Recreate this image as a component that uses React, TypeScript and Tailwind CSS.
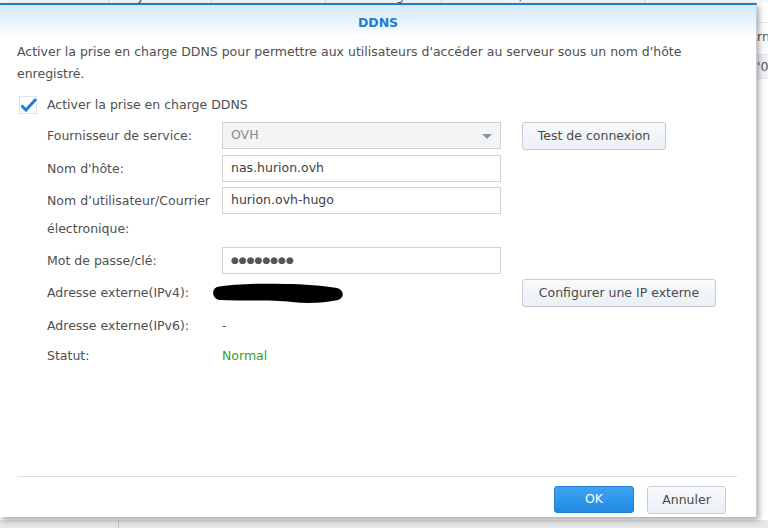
import { ReactNode } from 'react'

function Btn({ children, className = '' }: { children: ReactNode; className?: string }) {
  return (
    <button
      type="button"
      className={`flex h-[28px] items-center justify-center rounded-[3px] border border-[#c5ccd4] bg-gradient-to-b from-[#f8fafc] to-[#eaf0f6] text-[12.5px] text-[#4a4a4a] ${className}`}
    >
      {children}
    </button>
  )
}

function Row({ label, children, extra }: { label: ReactNode; children: ReactNode; extra?: ReactNode }) {
  return (
    <div className="flex items-start">
      <div className="w-[175px] shrink-0 leading-[27px] text-[#4f4f4f]">{label}</div>
      <div className="w-[279px] shrink-0">{children}</div>
      {extra && <div className="ml-[21px]">{extra}</div>}
    </div>
  )
}

function Field({ value, disabled }: { value: ReactNode; disabled?: boolean }) {
  return (
    <div
      className={`relative flex h-[27px] items-center border pl-[8px] ${
        disabled ? 'border-[#cdd2d7] bg-[#f2f4f6] text-[#8a8a8a]' : 'border-[#cfd3d7] bg-white text-[#3e3e3e]'
      }`}
    >
      {value}
    </div>
  )
}

export default function App() {
  const tabs = ['Journal', 'Moniteur', 'Stockage', 'Modifié / Créé le dernier jour', 'Dossier local']

  return (
    <div className="relative h-[528px] w-[768px] overflow-hidden bg-white font-['DejaVu_Sans',sans-serif] text-[12.5px]">
      {/* page behind the dialog */}
      <div className="flex h-full flex-col">
        <div className="h-[3px] overflow-hidden bg-[#f4f6f8]">
          <div className="-mt-[11px] flex pl-[108px] text-[12px] leading-[14px] text-[#555]">
            {tabs.map((t) => (
              <div key={t} className="border-l border-[#d0d5da] px-[30px]">
                {t}
              </div>
            ))}
          </div>
        </div>
        <div className="flex flex-1">
          <div className="w-[757px] shrink-0" />
          <div className="flex-1 overflow-hidden">
            <div className="mt-[19px] border-t border-[#e3e6e9] pt-[4px] text-[12.5px] leading-[20px] text-[#555]">
              rn
            </div>
            <div className="mt-[7px] h-[25px] border-y border-[#e3e8ee] bg-[#eef3f9] text-[12.5px] leading-[24px] text-[#555]">
              '0c
            </div>
          </div>
        </div>
        <div className="flex h-[8px] bg-[#e6e6e6]">
          <div className="w-[119px] border-r border-[#c8c8c8]" />
        </div>
      </div>

      {/* DDNS dialog */}
      <div className="absolute left-0 top-[3px] flex h-[514px] w-[757px] flex-col border-r border-t-2 border-r-[#c6ccd2] border-t-[#1b7fcc] bg-white shadow-[2px_3px_6px_rgba(0,0,0,0.35)]">
        <div className="flex h-[34px] shrink-0 items-center justify-center bg-gradient-to-b from-[#d5e8fa] to-white pt-[3px] text-[12.5px] font-bold text-[#1a7fcf]">
          DDNS
        </div>

        <div className="flex-1 pl-[17px] pr-[17px]">
          <p className="mt-[2px] leading-[22px] text-[#4f4f4f]">
            Activer la prise en charge DDNS pour permettre aux utilisateurs d'accéder au serveur sous un nom d'hôte
            enregistré.
          </p>

          <div className="mt-[9px] flex h-[22px] items-center">
            <svg width="19" height="19" viewBox="0 0 19 19" className="ml-[2px]">
              <rect x="0.5" y="0.5" width="17" height="17" fill="white" stroke="#dfe4ea" />
              <path d="M2.5 9.5 L7 14 L17 3" fill="none" stroke="#1f80d2" strokeWidth="3" strokeLinejoin="miter" />
            </svg>
            <span className="ml-[9px] text-[#4f4f4f]">Activer la prise en charge DDNS</span>
          </div>

          <div className="mt-[6px] flex flex-col gap-[5px] pl-[30px]">
            <Row label="Fournisseur de service:" extra={<Btn className="h-[27px] w-[144px]">Test de connexion</Btn>}>
              <Field
                disabled
                value={
                  <>
                    OVH
                    <svg width="10" height="6" viewBox="0 0 10 6" className="absolute right-[8px] top-[11px]">
                      <path d="M0 0 H10 L5 5 Z" fill="#8d949b" />
                    </svg>
                  </>
                }
              />
            </Row>
            <Row label="Nom d'hôte:">
              <Field value="nas.hurion.ovh" />
            </Row>
            <Row
              label={
                <div className="leading-[28px]">
                  Nom d’utilisateur/Courrier
                  <br />
                  électronique:
                </div>
              }
            >
              <Field value="hurion.ovh-hugo" />
            </Row>
            <div className="-mt-[1px]">
              <Row label="Mot de passe/clé:">
                <Field value={<span className="text-[9px] tracking-[0px] text-[#555]">●●●●●●●●</span>} />
              </Row>
            </div>
            <div className="flex items-center">
              <div className="w-[175px] shrink-0 text-[#4f4f4f]">Adresse externe(IPv4):</div>
              <div className="w-[279px] shrink-0">
                <svg width="132" height="23" viewBox="0 0 132 23" className="-ml-[10px]">
                  <path
                    d="M5 5 C22 2 50 1 72 2 C92 2 112 4 125 6 C132 8 133 15 126 18 C112 21 96 22 80 20 C60 18 30 19 8 18 C0 17 -1 7 5 5 Z"
                    fill="#000"
                  />
                </svg>
              </div>
              <div className="ml-[21px]">
                <Btn className="w-[194px]">Configurer une IP externe</Btn>
              </div>
            </div>
            <div className="flex flex-col">
              <div className="-mt-[1px] flex h-[30px] items-center">
                <div className="w-[175px] text-[#4f4f4f]">Adresse externe(IPv6):</div>
                <div className="text-[#4f4f4f]">-</div>
              </div>
              <div className="flex h-[30px] items-center">
                <div className="w-[175px] text-[#4f4f4f]">Statut:</div>
                <div className="text-[#3a9d23]">Normal</div>
              </div>
            </div>
          </div>
        </div>

        <div className="ml-[17px] mr-[19px] flex shrink-0 justify-end gap-[13px] border-t border-[#dcdfe2] pb-[3px] pr-[11px] pt-[9px]">
          <button
            type="button"
            className="flex h-[27px] w-[80px] items-center justify-center rounded-[3px] border border-[#1f7fd0] bg-gradient-to-b from-[#3ea3f0] to-[#1f8ae3] text-[12.5px] text-white"
          >
            OK
          </button>
          <Btn className="h-[27px] w-[79px]">Annuler</Btn>
        </div>
      </div>
    </div>
  )
}
